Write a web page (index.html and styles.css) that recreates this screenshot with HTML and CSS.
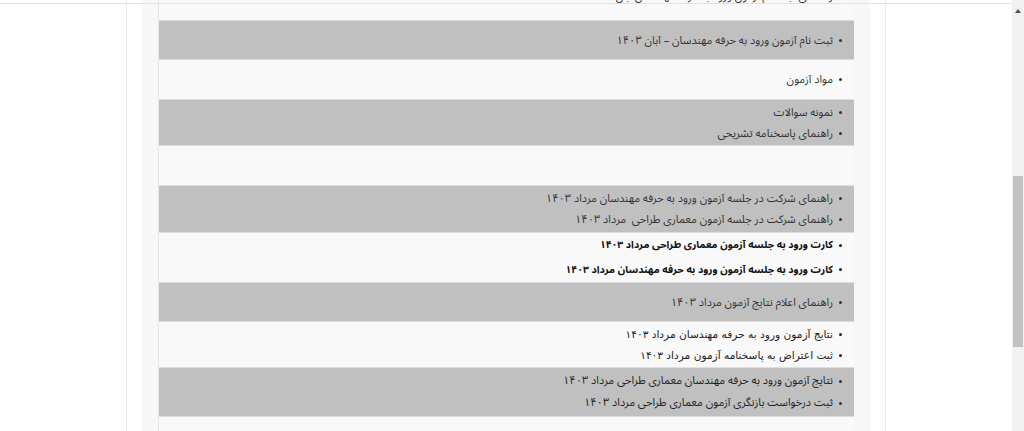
FILE: index.html
```html
<!DOCTYPE html>
<html lang="fa">
<head>
<meta charset="utf-8">
<title>آزمون ورود به حرفه</title>
<link rel="stylesheet" href="styles.css">
</head>
<body>
<div class="viewport">
  <div class="page">
    <div class="inner">
      <div class="table" dir="rtl">
        <div class="row white first">
          <ul><li>راهنمای ثبت نام آزمون ورود به حرفه مهندسان آبان ۱۴۰۳</li></ul>
        </div>
        <div class="row gray single tight">
          <ul><li>ثبت نام آزمون ورود به حرفه مهندسان – آبان ۱۴۰۳</li></ul>
        </div>
        <div class="row white single">
          <ul><li>مواد آزمون</li></ul>
        </div>
        <div class="row gray double short">
          <ul>
            <li>نمونه سوالات</li>
            <li>راهنمای پاسخنامه تشریحی</li>
          </ul>
        </div>
        <div class="row white empty"></div>
        <div class="row gray double">
          <ul>
            <li>راهنمای شرکت در جلسه آزمون ورود به حرفه مهندسان مرداد ۱۴۰۳</li>
            <li>راهنمای شرکت در جلسه آزمون معماری طراحی&nbsp; مرداد ۱۴۰۳</li>
          </ul>
        </div>
        <div class="row white bold">
          <ul>
            <li>کارت ورود به جلسه آزمون معماری طراحی مرداد ۱۴۰۳</li>
            <li>کارت ورود به جلسه آزمون ورود به حرفه مهندسان مرداد ۱۴۰۳</li>
          </ul>
        </div>
        <div class="row gray single tight">
          <ul><li>راهنمای اعلام نتایج آزمون مرداد ۱۴۰۳</li></ul>
        </div>
        <div class="row white double short alt">
          <ul>
            <li>نتایج آزمون ورود به حرفه مهندسان مرداد ۱۴۰۳</li>
            <li>ثبت اعتراض به پاسخنامه آزمون مرداد ۱۴۰۳</li>
          </ul>
        </div>
        <div class="row gray double strong">
          <ul>
            <li>نتایج آزمون ورود به حرفه مهندسان معماری طراحی مرداد ۱۴۰۳</li>
            <li>ثبت درخواست بازنگری آزمون معماری طراحی مرداد ۱۴۰۳</li>
          </ul>
        </div>
        <div class="row white tail"></div>
      </div>
    </div>
  </div>
</div>
<div class="topline"></div>
<div class="scrollbar">
  <div class="arrow"></div>
  <div class="thumb"></div>
</div>
</body>
</html>
```
FILE: styles.css
```css
html, body {
  margin: 0;
  padding: 0;
  overflow: hidden;
  background: #ffffff;
  height: 431px;
}

.viewport {
  width: 1012px;
}

.page {
  width: 728px;
  margin: 0 auto;
  padding: 0 15px;
  border-left: 1px solid #ececec;
  border-right: 1px solid #ececec;
  min-height: 500px;
}

.inner {
  background: #f7f7f7;
  padding: 0 16px;
  min-height: 500px;
}

.table {
  border-left: 1px solid #e6e6e6;
  font-family: "Noto Sans Arabic", "Noto Sans", sans-serif;
  font-size: 11px;
  color: #333333;
}

.row {
  border-top: 1px solid #dedede;
  box-sizing: border-box;
}

.row.first {
  margin-top: -20px;
  border-top: none;
  height: 40px;
  padding: 6px 0 0;
}

.row.white { background: #f9f9f9; }
.row.gray { background: #c0c0c0; }

.row ul {
  margin: 0;
  padding: 0 12px 0 0;
  list-style: none;
}

.row li {
  display: flex;
  align-items: center;
  gap: 6px;
  line-height: 21px;
  white-space: nowrap;
}

.row li::before {
  content: "";
  flex: none;
  width: 3px;
  height: 3px;
  border-radius: 50%;
  background: #333333;
}

.row.single { padding: 9px 0 9px; }
.row.single.tight { padding: 9px 0 8px; }
.row.double { padding: 2px 0 2px; }
.row.double.short { padding: 2px 0 1px; }
.row.empty { height: 40px; }

.row.bold { padding: 0; }
.row.bold li {
  line-height: 24.5px;
  font-size: 10.2px;
  font-weight: bold;
  color: #111111;
}
.row.bold li::before { background: #111111; }

.row.alt li {
  font-family: "DejaVu Sans", sans-serif;
  color: #222222;
  font-size: 10.6px;
}
.row.alt li::before { background: #222222; }

.row.strong li {
  line-height: 22px;
  color: #1e1e1e;
}

.row.tail { height: 60px; }

.topline {
  position: fixed;
  top: 3px;
  left: 0;
  width: 1012px;
  height: 1px;
  background: #e2e2e2;
}

.scrollbar {
  position: fixed;
  top: 0;
  right: 0;
  width: 12px;
  height: 431px;
  background: #f1f1f1;
}

.scrollbar .arrow {
  position: absolute;
  top: 9px;
  left: 3px;
  width: 0;
  height: 0;
  border-left: 3px solid transparent;
  border-right: 3px solid transparent;
  border-bottom: 4px solid #505050;
}

.scrollbar .thumb {
  position: absolute;
  top: 176px;
  left: 1px;
  width: 10px;
  height: 171px;
  background: #c1c1c1;
}
```
